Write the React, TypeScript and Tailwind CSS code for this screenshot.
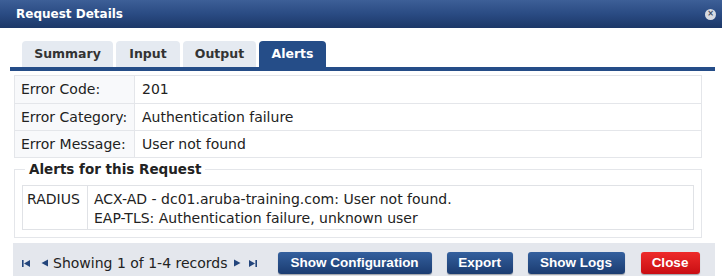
import React from 'react';

const rows = [
  { label: 'Error Code:', value: '201' },
  { label: 'Error Category:', value: 'Authentication failure' },
  { label: 'Error Message:', value: 'User not found' },
];

const tabs = ['Summary', 'Input', 'Output', 'Alerts'];

const FirstIcon = () => (
  <svg width="9" height="9" viewBox="0 0 9 9" className="fill-[#23457c]">
    <rect x="0" y="1" width="1.6" height="7" />
    <path d="M8 1 L2 4.5 L8 8 Z" />
  </svg>
);
const PrevIcon = () => (
  <svg width="7" height="8" viewBox="0 0 7 8" className="fill-[#23457c]">
    <path d="M7 0.5 L0.5 4 L7 7.5 Z" />
  </svg>
);
const NextIcon = () => (
  <svg width="7" height="8" viewBox="0 0 7 8" className="fill-[#23457c]">
    <path d="M0 0.5 L6.5 4 L0 7.5 Z" />
  </svg>
);
const LastIcon = () => (
  <svg width="9" height="9" viewBox="0 0 9 9" className="fill-[#23457c]">
    <path d="M1 1 L7 4.5 L1 8 Z" />
    <rect x="7.4" y="1" width="1.6" height="7" />
  </svg>
);

const btnBlue =
  'h-[22px] rounded-[3px] bg-gradient-to-b from-[#34609e] to-[#1b3c71] text-white text-[13.5px] font-bold flex items-center justify-center shadow-[0_1px_1px_rgba(0,0,0,0.3)]';

export default function App() {
  return (
    <div className="w-[722px] h-[276px] bg-white overflow-hidden font-['DejaVu_Sans',sans-serif] text-[14px] text-[#222]">
      {/* title bar */}
      <div className="h-[28px] bg-gradient-to-b from-[#3d5f97] via-[#2a4b83] to-[#1c3868] flex items-center justify-between pl-[16px] pr-[6px]">
        <span className="text-white font-bold text-[12px]">Request Details</span>
        <span className="w-[11px] h-[11px] rounded-full bg-[#d7dbe2] flex items-center justify-center text-[#3b4a63] text-[8px] leading-none font-bold">×</span>
      </div>

      <div className="pl-[10px] pr-[7px]">
        {/* tabs */}
        <div className="mt-[13px] flex items-end pl-[12px] gap-[3px] h-[26px]">
          {tabs.map(t => (
            <div
              key={t}
              className={`h-[26px] rounded-t-[4px] flex items-center justify-center font-bold text-[12.5px] ${
                t === 'Alerts' ? 'bg-[#254d88] text-white' : 'bg-[#e5eaf1] text-[#333]'
              } ${t === 'Summary' ? 'w-[91px]' : t === 'Input' ? 'w-[64px]' : t === 'Output' ? 'w-[73px]' : 'w-[67px]'}`}
            >
              {t}
            </div>
          ))}
        </div>
        <div className="h-[4px] bg-[#254d88]" />

        <div className="pl-[4px] pr-[13px]">
          {/* error table */}
          <div className="mt-[4px] border border-[#e4e6ea]">
            {rows.map((r, i) => (
              <div key={r.label} className={`flex h-[27px] ${i > 0 ? 'border-t border-[#e4e6ea]' : ''}`}>
                <div className="w-[120px] shrink-0 pl-[6px] flex items-center bg-[#f8f9fb] border-r border-[#e4e6ea]">{r.label}</div>
                <div className="pl-[7px] flex items-center">{r.value}</div>
              </div>
            ))}
          </div>

          {/* alerts fieldset */}
          <div className="relative mt-[11px] border border-[#e4e6ea] h-[69px] pt-[15px] px-[7px]">
            <span className="absolute left-[10px] top-[-9px] bg-white px-[4px] font-bold text-[13.5px] leading-[17px]">Alerts for this Request</span>
            <div className="flex border border-[#e0e2e6] h-[45px]">
              <div className="w-[65px] shrink-0 pl-[4px] pt-[4px] border-r border-[#e0e2e6] leading-[19px]">RADIUS</div>
              <div className="pl-[6px] pt-[4px] leading-[19px]">
                <div>ACX-AD - dc01.aruba-training.com: User not found.</div>
                <div>EAP-TLS: Authentication failure, unknown user</div>
              </div>
            </div>
          </div>
        </div>

        {/* footer */}
        <div className="mt-[5px] ml-[3px] h-[40px] bg-[#e4e7ed] flex items-start pt-[9px] pl-[9px]">
          <div className="flex items-center h-[22px] text-[#222]">
            <FirstIcon />
            <span className="ml-[10px]"><PrevIcon /></span>
            <span className="ml-[5px]">Showing 1 of 1-4 records</span>
            <span className="ml-[6px]"><NextIcon /></span>
            <span className="ml-[7px]"><LastIcon /></span>
          </div>
          <div className="ml-[21px] flex gap-[15px] font-['Liberation_Sans',sans-serif]">
            <div className={`${btnBlue} w-[154px]`}>Show Configuration</div>
            <div className={`${btnBlue} w-[66px]`}>Export</div>
            <div className={`${btnBlue} w-[97px]`}>Show Logs</div>
            <div className="h-[22px] w-[59px] ml-[1px] rounded-[3px] bg-gradient-to-b from-[#ee2a2a] to-[#c90c12] text-white text-[13.5px] font-bold flex items-center justify-center shadow-[0_1px_1px_rgba(0,0,0,0.3)]">Close</div>
          </div>
        </div>
      </div>
    </div>
  );
}
